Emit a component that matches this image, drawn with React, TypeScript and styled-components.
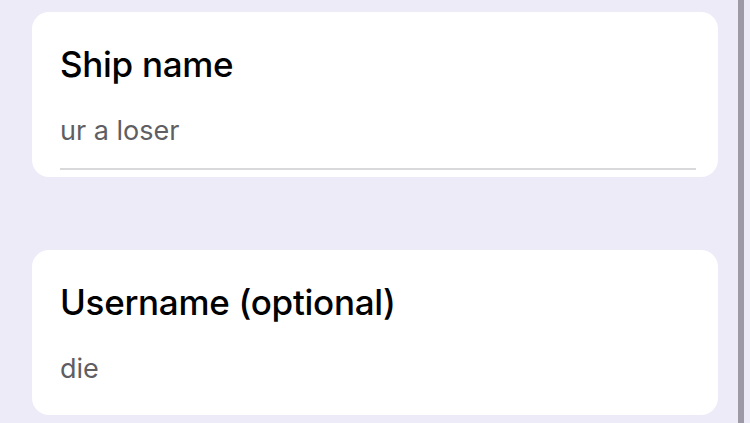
import React from "react";
import styled, { createGlobalStyle } from "styled-components";

const Global = createGlobalStyle`
  html, body {
    margin: 0;
    padding: 0;
    background: #eeebf8;
    overflow: hidden;
  }
  body {
    font-family: Inter, "Noto Sans", "Liberation Sans", sans-serif;
    -webkit-font-smoothing: antialiased;
  }
`;

const Screen = styled.div`
  display: flex;
  flex-direction: row;
  width: 750px;
  height: 423px;
  overflow: hidden;
  background: #eeebf8;
`;

const Content = styled.div`
  display: flex;
  flex-direction: column;
  gap: 73px;
  width: 738px;
  flex: 0 0 738px;
  padding: 12px 0 0 32px;
  box-sizing: border-box;
`;

const Card = styled.section`
  width: 686px;
  height: 165px;
  box-sizing: border-box;
  background: #ffffff;
  border-radius: 17px;
  padding: 31px 22px 0 28px;
  display: flex;
  flex-direction: column;
`;

const Label = styled.div`
  font-size: 35px;
  line-height: 42px;
  font-weight: 500;
  color: #000000;
  letter-spacing: -0.3px;
`;

const Field = styled.div<{ $underline?: boolean }>`
  margin-top: 29px;
  padding-bottom: 21px;
  border-bottom: 2px solid ${(p) => (p.$underline ? "#d9d9db" : "transparent")};
  font-size: 27px;
  line-height: 33px;
  font-weight: 400;
  color: #5e5e63;
`;

const ScrollIndicator = styled.div`
  flex: 0 0 6px;
  width: 6px;
  height: 423px;
  background: #9d9aa6;
`;

export default function App() {
  return (
    <>
      <Global />
      <Screen>
        <Content>
          <Card>
            <Label>Ship name</Label>
            <Field $underline>ur a loser</Field>
          </Card>
          <Card>
            <Label>Username (optional)</Label>
            <Field>die</Field>
          </Card>
        </Content>
        <ScrollIndicator />
      </Screen>
    </>
  );
}
